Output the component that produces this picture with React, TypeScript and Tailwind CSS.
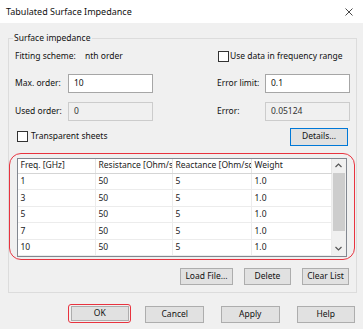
import React from "react";

const Btn = ({ w, children, className = "" }: { w: string; children: React.ReactNode; className?: string }) => (
  <div
    className={`${w} h-[17px] bg-[#e1e1e1] border border-[#adadad] flex items-center justify-center text-[8.5px] text-[#111] ${className}`}
  >
    {children}
  </div>
);

const Check = ({ className = "" }: { className?: string }) => (
  <div className={`w-[11px] h-[11px] bg-white border border-[#333] ${className}`} />
);

const Input = ({ value, disabled = false }: { value: string; disabled?: boolean }) => (
  <div
    className={`w-[85px] h-[19px] border flex items-center pl-[5px] text-[8.5px] ${
      disabled ? "bg-[#f0f0f0] border-[#cccccc] text-[#333]" : "bg-white border-[#a6a6a6] text-[#111]"
    }`}
  >
    {value}
  </div>
);

const rows = [
  ["1", "50", "5", "1.0"],
  ["3", "50", "5", "1.0"],
  ["5", "50", "5", "1.0"],
  ["7", "50", "5", "1.0"],
  ["10", "50", "5", "1.0"],
];

const colW = ["w-[78px]", "w-[77px]", "w-[79px]", "w-[80px]"];
const headers = ["Freq. [GHz]", "Resistance [Ohm/sq]", "Reactance [Ohm/sq]", "Weight"];

export default function App() {
  return (
    <div className="w-[363px] h-[329px] bg-[#f0f0f0] overflow-hidden font-['Noto_Sans',sans-serif] text-[#111]">
      {/* Title bar */}
      <div className="h-[23px] bg-white flex items-center justify-between pl-[6px] pr-[10px]">
        <span className="text-[9px] text-[#111]">Tabulated Surface Impedance</span>
        <svg width="8" height="8" viewBox="0 0 8 8">
          <path d="M0.5 0.5 L7.5 7.5 M7.5 0.5 L0.5 7.5" stroke="#333" strokeWidth="0.9" fill="none" />
        </svg>
      </div>

      <div className="px-[8px] pt-[15px]">
        {/* Group box */}
        <div className="relative w-[349px] h-[255px] border border-[#dcdcdc] pl-[6px] pr-[5px] pt-[9px]">
          <span className="absolute -top-[7px] left-[4px] px-[1px] bg-[#f0f0f0] text-[8.5px] leading-[12px]">
            Surface impedance
          </span>

          {/* Row 1 */}
          <div className="h-[16px] flex items-center">
            <div className="w-[202px] flex items-center text-[8.5px]">
              <span className="w-[70px]">Fitting scheme:</span>
              <span>nth order</span>
            </div>
            <div className="w-[134px] flex items-center text-[8.5px]">
              <Check className="ml-[1px] mr-[1px]" />
              <span>Use data in frequency range</span>
            </div>
          </div>

          {/* Row 2 */}
          <div className="h-[19px] mt-[10px] flex items-center">
            <div className="w-[202px] flex items-center text-[8.5px]">
              <span className="w-[53px]">Max. order:</span>
              <Input value="10" />
            </div>
            <div className="w-[134px] flex items-center text-[8.5px]">
              <span className="w-[48px]">Error limit:</span>
              <Input value="0.1" />
            </div>
          </div>

          {/* Row 3 */}
          <div className="h-[19px] mt-[9px] flex items-center">
            <div className="w-[202px] flex items-center text-[8.5px]">
              <span className="w-[53px]">Used order:</span>
              <Input value="0" disabled />
            </div>
            <div className="w-[134px] flex items-center text-[8.5px]">
              <span className="w-[48px]">Error:</span>
              <Input value="0.05124" disabled />
            </div>
          </div>

          {/* Row 4 */}
          <div className="h-[19px] mt-[6px] flex items-center justify-between">
            <div className="flex items-center text-[8.5px]">
              <Check className="ml-[2px] mr-[3px]" />
              <span>Transparent sheets</span>
            </div>
            <div className="mr-[3px] w-[58px] h-[18px] border border-[#0078d7] bg-[#e1e1e1] flex items-center justify-center text-[8.5px]">
              Details...
            </div>
          </div>

          {/* Table with red highlight */}
          <div className="mt-[7px] -ml-[6px] -mr-[4px] h-[107px] border-[1.5px] border-[#e8333f] rounded-[12px] pl-[6.5px] pt-[3.5px]">
            <div className="w-[330px] h-[99px] border border-[#828790] bg-white flex overflow-hidden">
              <div className="flex flex-col">
                <div className="h-[15px] flex border-b border-[#d5d5d5] bg-white shrink-0">
                  {headers.map((h, i) => (
                    <div
                      key={h}
                      className={`${colW[i]} h-full border-r border-[#e5e5e5] pl-[3px] flex items-center overflow-hidden whitespace-nowrap text-[8.5px] text-[#222]`}
                    >
                      {h}
                    </div>
                  ))}
                </div>
                {rows.map((r, ri) => (
                  <div key={ri} className="h-[16.6px] flex border-b border-[#ececec] shrink-0">
                    {r.map((c, i) => (
                      <div
                        key={i}
                        className={`${colW[i]} h-full border-r border-[#ececec] pl-[3px] flex items-center text-[8.5px] text-[#222]`}
                      >
                        {c}
                      </div>
                    ))}
                  </div>
                ))}
              </div>
              {/* Scrollbar */}
              <div className="w-[14px] h-full bg-[#f0f0f0] flex flex-col items-center">
                <div className="h-[14px] flex items-center justify-center">
                  <svg width="7" height="5" viewBox="0 0 7 5">
                    <path d="M0.5 4 L3.5 1 L6.5 4" stroke="#555" strokeWidth="1.2" fill="none" />
                  </svg>
                </div>
                <div className="w-[12px] h-[58px] bg-[#cdcdcd]" />
                <div className="flex-1" />
                <div className="h-[14px] flex items-center justify-center">
                  <svg width="7" height="5" viewBox="0 0 7 5">
                    <path d="M0.5 1 L3.5 4 L6.5 1" stroke="#555" strokeWidth="1.2" fill="none" />
                  </svg>
                </div>
              </div>
            </div>
          </div>

          {/* List buttons */}
          <div className="mt-[8px] flex justify-end gap-[11px] mr-[2px]">
            <Btn w="w-[53px]">Load File...</Btn>
            <Btn w="w-[47px]">Delete</Btn>
            <Btn w="w-[47px]">Clear List</Btn>
          </div>
        </div>

        {/* Dialog buttons */}
        <div className="mt-[11px] flex items-end">
          <div className="ml-[60px] w-[64px] h-[19px] border-[1.5px] border-[#e8333f] rounded-[3px] flex items-center justify-center">
            <div className="w-[58px] h-[15px] bg-[#e1e1e1] border border-[#adadad] flex items-center justify-center text-[8.5px]">
              OK
            </div>
          </div>
          <Btn w="w-[59px]" className="ml-[14px]">Cancel</Btn>
          <Btn w="w-[59px]" className="ml-[17px]">Apply</Btn>
          <Btn w="w-[59px]" className="ml-[17px]">Help</Btn>
        </div>
      </div>
    </div>
  );
}
